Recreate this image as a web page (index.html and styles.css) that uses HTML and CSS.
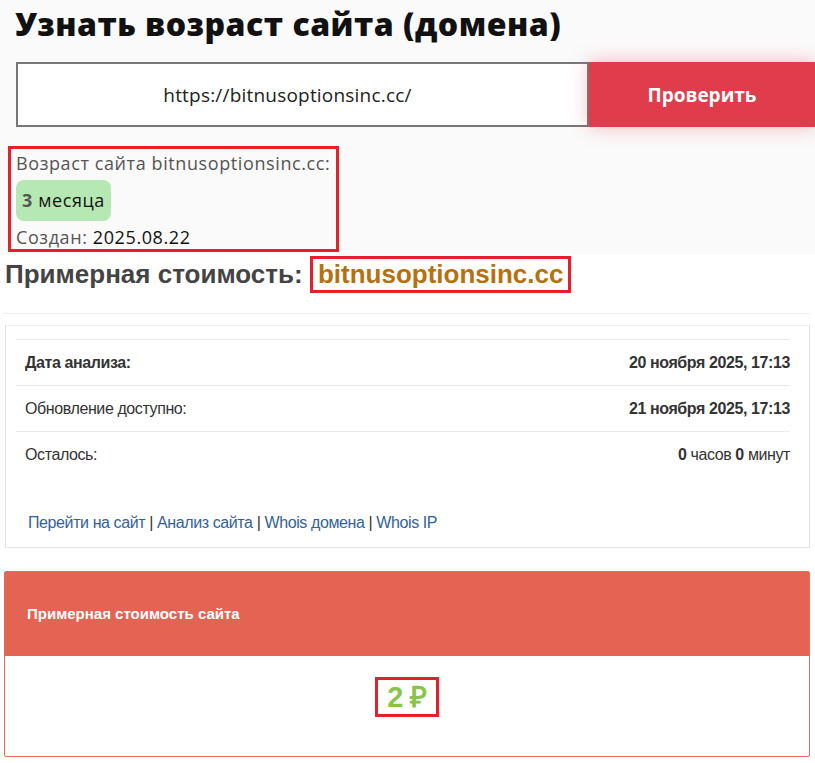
FILE: index.html
```html
<!DOCTYPE html>
<html lang="ru">
<head>
<meta charset="utf-8">
<title>Узнать возраст сайта</title>
<link rel="stylesheet" href="styles.css">
</head>
<body>
<section class="top">
  <h1 class="title">Узнать возраст сайта (домена)</h1>
  <form class="search">
    <div class="search-input">https://bitnusoptionsinc.cc/</div>
    <div class="search-btn">Проверить</div>
  </form>
  <div class="age-box">
    <div class="age-label">Возраст сайта bitnusoptionsinc.cc:</div>
    <div class="age-badge"><b>3</b> месяца</div>
    <div class="age-created">Создан: <span>2025.08.22</span></div>
  </div>
</section>
<h2 class="cost-title">Примерная стоимость: <span class="cost-domain">bitnusoptionsinc.cc</span></h2>
<div class="divider"></div>
<div class="card">
  <div class="row first"><span class="label strong">Дата анализа:</span><span class="val strong">20 ноября 2025, 17:13</span></div>
  <div class="row"><span class="label">Обновление доступно:</span><span class="val strong">21 ноября 2025, 17:13</span></div>
  <div class="row"><span class="label">Осталось:</span><span class="val"><b>0</b> часов <b>0</b> минут</span></div>
  <div class="links"><a href="#">Перейти на сайт</a> | <a href="#">Анализ сайта</a> | <a href="#">Whois домена</a> | <a href="#">Whois IP</a></div>
</div>
<div class="panel">
  <div class="panel-head">Примерная стоимость сайта</div>
  <div class="panel-body"><span class="price">2 ₽</span></div>
</div>
</body>
</html>
```
FILE: styles.css
```css
body {
  margin: 0;
  background: #fff;
  font-family: "Liberation Sans", Arial, sans-serif;
  color: #333;
}
.top {
  background: #fafafa;
  padding: 0 0 3px 0;
}
.title {
  margin: 0;
  padding: 0 0 0 15px;
  font-family: "Open Sans", sans-serif;
  font-weight: 800;
  font-size: 32px;
  letter-spacing: 0.5px;
  line-height: 48px;
  color: #111;
}
.search {
  display: flex;
  margin: 14px 0 0 16px;
  height: 65px;
}
.search-input {
  width: 539px;
  padding-right: 30px;
  border: 2px solid #777;
  background: #fff;
  display: flex;
  align-items: center;
  justify-content: center;
  font-family: "Open Sans", sans-serif;
  font-size: 19px;
  letter-spacing: 0.2px;
  color: #222;
}
.search-btn {
  flex: 1;
  background: #e03c4b;
  color: #fff;
  display: flex;
  align-items: center;
  justify-content: center;
  font-family: "Open Sans", sans-serif;
  font-weight: 700;
  font-size: 19px;
  box-shadow: 0 0 18px rgba(224, 60, 75, 0.35);
}
.age-box {
  margin: 19px 0 0 8px;
  width: 320px;
  border: 3px solid #e3202b;
  padding: 3px 0 0 5px;
  font-family: "Open Sans", sans-serif;
  font-size: 18px;
  letter-spacing: 0.6px;
  color: #555;
  white-space: nowrap;
}
.age-label {
  line-height: 22px;
}
.age-badge {
  display: inline-block;
  margin: 6px 0 4px 0;
  background: #b5e8b2;
  border-radius: 8px;
  padding: 0 6px;
  height: 41px;
  line-height: 41px;
  color: #111;
}
.age-badge b {
  color: #555;
}
.age-created {
  line-height: 24px;
}
.age-created span {
  color: #111;
}
.cost-title {
  margin: 0;
  padding: 1px 0 0 5px;
  font-size: 26px;
  font-weight: 700;
  color: #444;
  line-height: 37px;
}
.cost-domain {
  display: inline-block;
  border: 3px solid #e3202b;
  color: #b8700f;
  padding: 0 5px;
  line-height: 31px;
}
.divider {
  margin: 20px 5px 0 3px;
  border-top: 1px solid #eee;
}
.card {
  margin: 11px 5px 0 5px;
  border: 1px solid #e4e4e4;
  border-top-color: #f0f0f0;
  padding: 13px 19px 15px 10px;
  font-size: 16px;
  color: #333;
}
.row {
  display: flex;
  justify-content: space-between;
  border-top: 1px solid #eaeaea;
  height: 45px;
  align-items: center;
  padding: 0 0 0 9px;
  letter-spacing: -0.4px;
}
.strong {
  font-weight: 700;
}
.val b {
  font-weight: 700;
}
.links {
  padding: 37px 0 0 12px;
  font-size: 16px;
  color: #333;
  letter-spacing: -0.4px;
}
.links a {
  color: #33629a;
  text-decoration: none;
}
.panel {
  margin: 23px 5px 0 4px;
  border: 1px solid #e06a5c;
  border-radius: 2px;
}
.panel-head {
  background: #e46353;
  color: #fff;
  font-weight: 700;
  font-size: 15px;
  height: 84px;
  line-height: 84px;
  padding-left: 22px;
  letter-spacing: 0;
}
.panel-body {
  height: 100px;
  display: flex;
  align-items: flex-start;
  justify-content: center;
  padding-top: 21px;
  box-sizing: border-box;
}
.price {
  border: 3px solid #e3202b;
  color: #8bc34a;
  font-weight: 700;
  font-size: 29px;
  padding: 3px 9px 2px;
  line-height: 29px;
  letter-spacing: -0.5px;
}
```
